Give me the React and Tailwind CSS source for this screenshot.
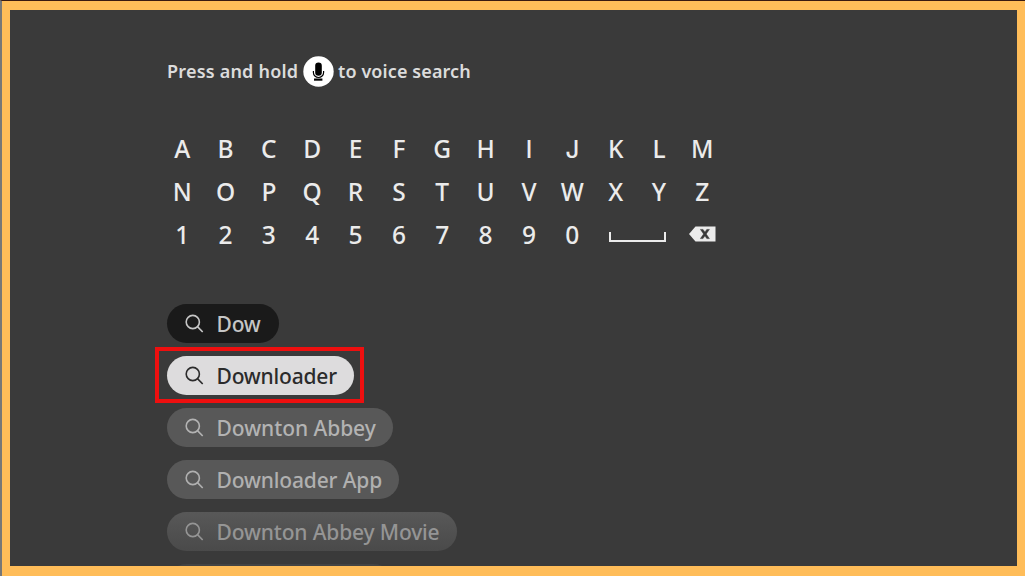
import React from 'react';

const rows = [
  ['A', 'B', 'C', 'D', 'E', 'F', 'G', 'H', 'I', 'J', 'K', 'L', 'M'],
  ['N', 'O', 'P', 'Q', 'R', 'S', 'T', 'U', 'V', 'W', 'X', 'Y', 'Z'],
  ['1', '2', '3', '4', '5', '6', '7', '8', '9', '0'],
];

// Noto's I has serifs and its J drops below the baseline
const plainKeys = ['I', 'J'];

const suggestions = [
  { label: 'Dow', pill: 'w-[112px] bg-[#1a1a1a] text-[#c6c6c6]', text: 'tracking-[-0.2px]' },
  { label: 'Downloader', pill: 'w-[187px] bg-[#dddcdd] text-[#2b2b2b]', text: 'tracking-[-0.2px]', selected: true },
  { label: 'Downton Abbey', pill: 'w-[226px] bg-[#585858] text-[#b3b3b3]', text: 'tracking-[-0.05px]' },
  { label: 'Downloader App', pill: 'w-[232px] bg-[#585858] text-[#b0b0b0]', text: 'tracking-[-0.15px]' },
  { label: 'Downton Abbey Movie', pill: 'w-[290px] bg-linear-to-b from-[#585858] to-[#4a4a4a] text-[#959595]', text: 'tracking-[-0.15px]' },
];

function SearchIcon() {
  return (
    <svg className="h-[20px] w-[20px] shrink-0" viewBox="0 0 20 20" fill="none" stroke="currentColor" strokeWidth="1.6">
      <circle cx="7.8" cy="8" r="6.6" />
      <path d="M12.5 12.6L17.7 18" />
    </svg>
  );
}

function MicIcon() {
  return (
    <svg className="h-[31px] w-[31px]" viewBox="0 0 31 31">
      <circle cx="15.5" cy="15.5" r="15.2" fill="#fff" />
      <rect x="12.2" y="6.4" width="6.6" height="13.4" rx="3.3" fill="#000" />
      <path d="M10.4 15v1.4a5.1 5.1 0 0 0 10.2 0V15" fill="none" stroke="#000" strokeWidth="1.2" />
      <path d="M11 23.6h8.4" stroke="#000" strokeWidth="2.2" />
    </svg>
  );
}

function SpaceIcon() {
  return (
    <svg className="h-[12px] w-[57px]" viewBox="0 0 57 12" fill="none" stroke="#ebebeb" strokeWidth="2">
      <path d="M1 1V10H56V1" />
    </svg>
  );
}

function DeleteIcon() {
  return (
    <svg className="h-[16px] w-[27px]" viewBox="0 0 27 16">
      <path d="M0 8L6.5 0.5H26.5V15.5H6.5Z" fill="#ebebeb" />
      <path d="M11.4 3.4H14L20.4 12.6H17.8ZM17.8 3.4H20.4L14 12.6H11.4Z" fill="#3a3a3a" stroke="#3a3a3a" strokeWidth="0.5" />
    </svg>
  );
}

function Keyboard() {
  return (
    <div className="mt-[40px] ml-[-6.5px] grid w-[563.5px] grid-cols-13 text-[24.5px] font-medium text-[#ebebeb]">
      {rows.flat().map((key) => (
        <div key={key} className="flex h-[43.4px] items-center justify-center pt-[0.4px] leading-none">
          {plainKeys.includes(key) ? (
            <span className="pt-[3px] font-['Inter',sans-serif] text-[24px]">{key}</span>
          ) : (
            key
          )}
        </div>
      ))}
      <div className="col-span-2 flex h-[43.4px] items-center justify-center pt-[3px]">
        <SpaceIcon />
      </div>
      <div className="flex h-[43.4px] items-center justify-center pb-[3px]">
        <DeleteIcon />
      </div>
    </div>
  );
}

function Suggestion({ item }) {
  return (
    <div className={`relative flex h-[39px] shrink-0 items-center rounded-full pl-[17.5px] ${item.pill}`}>
      <SearchIcon />
      <span className={`mt-[2px] ml-[12px] whitespace-nowrap text-[21px] font-medium leading-none ${item.text}`}>
        {item.label}
      </span>
      {item.selected && (
        <div className="absolute -top-[9px] -right-[10px] -bottom-[8px] -left-[12px] border-4 border-[#ee0f0f]" />
      )}
    </div>
  );
}

export default function App() {
  return (
    <div className="h-[576px] w-[1025px] overflow-hidden border-t border-l-2 border-t-[#3a1a10] border-l-[#777777] bg-[#ffbd59] pt-[9px] pr-[8px] pb-[10px] pl-[8px] font-['Noto_Sans',sans-serif]">
      <div className="h-full overflow-hidden bg-[#3a3a3a] pt-[46px] pl-[157px]">
        <div className="flex h-[31px] items-center text-[18px] font-semibold text-[#dcdcdc]">
          <span className="w-[136px] whitespace-nowrap tracking-[0.2px]">Press and hold</span>
          <MicIcon />
          <span className="ml-[4px] whitespace-nowrap tracking-[0.1px]">to voice search</span>
        </div>
        <Keyboard />
        <div className="mt-[47px] flex flex-col items-start gap-[13px]">
          {suggestions.map((item) => (
            <Suggestion key={item.label} item={item} />
          ))}
          <div className="h-[39px] w-[226px] rounded-full bg-[#444444]" />
        </div>
      </div>
    </div>
  );
}
